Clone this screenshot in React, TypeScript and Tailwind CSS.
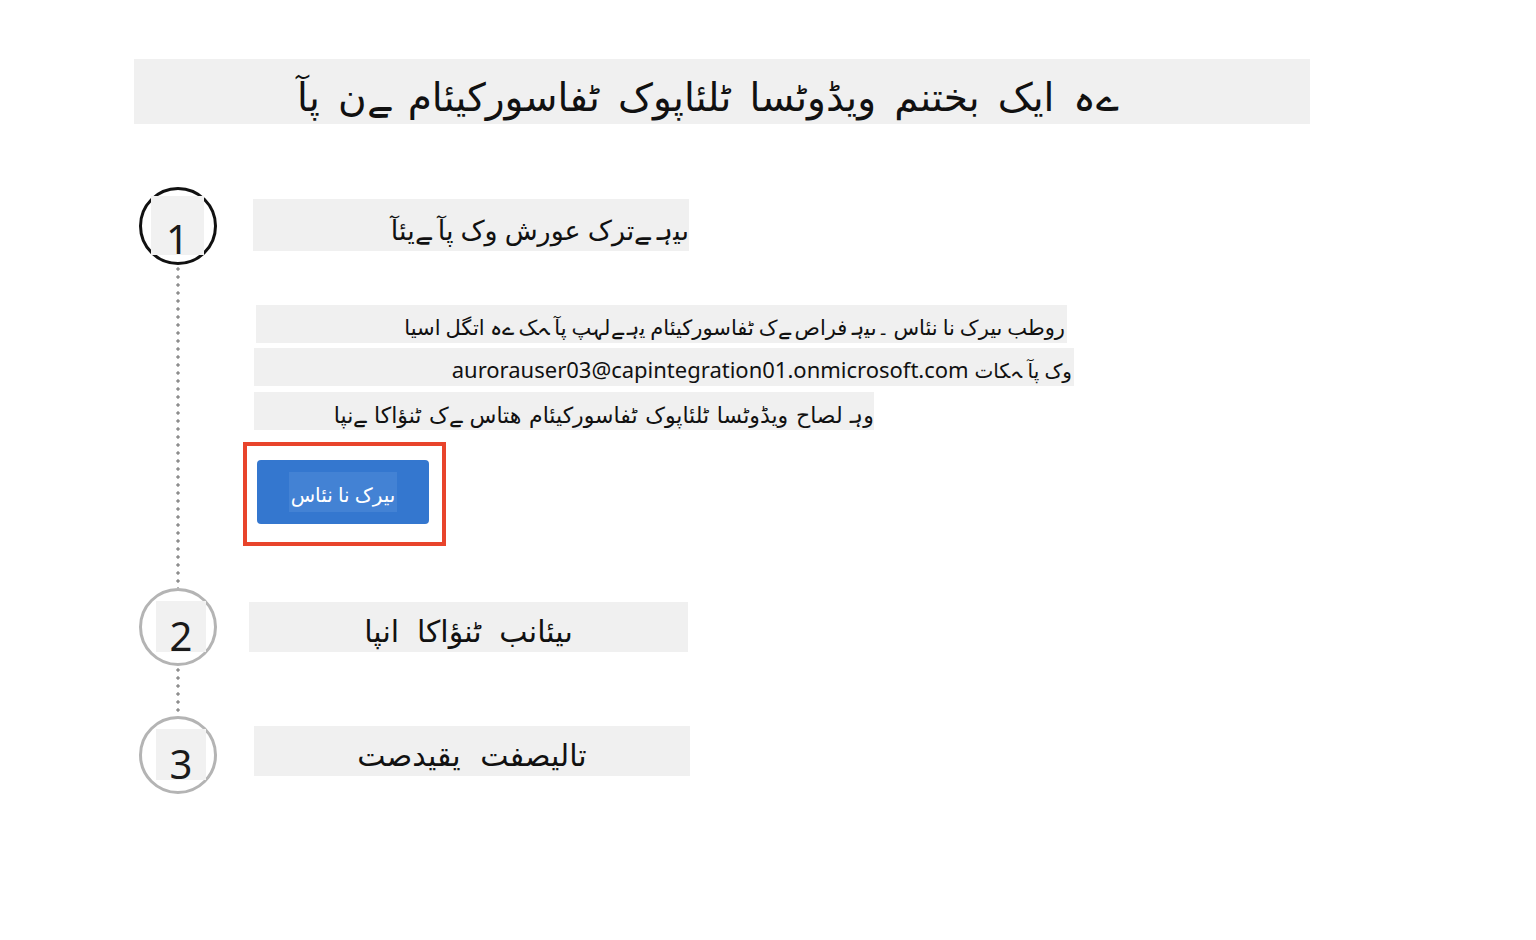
const ov = '[unicode-bidi:bidi-override] [direction:ltr] whitespace-nowrap'
const font = "font-['Noto_Sans','DejaVu_Sans',sans-serif]"

function StepCircle({ n, active }: { n: string; active?: boolean }) {
  return (
    <div
      className={`relative h-[78px] w-[78px] shrink-0 rounded-full border-[3px] ${
        active ? 'border-[#111]' : 'border-[#b4b4b4]'
      }`}
    >
      <div
        className={`absolute flex items-end justify-center bg-[#f1f1f1] ${
          active ? 'left-[9px] top-[6px] h-[59px] w-[53px]' : 'left-[14px] top-[10px] h-[51px] w-[50px]'
        }`}
      >
        <span className="text-[40px] leading-[32px] text-[#1a1a1a]">{n}</span>
      </div>
    </div>
  )
}

function Dots({ h }: { h: string }) {
  return (
    <div
      className={`${h} w-[4px] self-center bg-[radial-gradient(circle,#8e8e8e_1.4px,transparent_1.9px)] bg-[length:4px_8px] bg-repeat-y`}
    />
  )
}

export default function App() {
  return (
    <div className={`min-h-[940px] w-[1536px] bg-white ${font} text-[#111]`}>
      <div className="pl-[134px] pt-[59px]">
        <div className="flex h-[65px] w-[1176px] items-center bg-[#f0f0f0] pl-[163px]">
          <span className={`${ov} text-[39px] leading-none pt-[8px] [word-spacing:8px]`}>
            آپ نے مائیکروسافٹ کوپائلٹ اسٹوڈیو منتخب کیا ہے
          </span>
        </div>
      </div>

      <div className="mt-[63px] flex pl-[139px]">
        {/* step markers */}
        <div className="flex w-[78px] flex-col">
          <StepCircle n="1" active />
          <Dots h="h-[323px]" />
          <StepCircle n="2" />
          <Dots h="h-[50px]" />
          <StepCircle n="3" />
        </div>

        {/* content */}
        <div className="ml-[26px] flex flex-col items-start">
          <div className="ml-[10px] mt-[12px] flex h-[52px] w-[436px] items-center justify-end bg-[#f0f0f0]">
            <span className={`${ov} text-[27px] leading-none pt-[8px]`}>آئیے آپ کو شروع کرتے ہیں</span>
          </div>

          <div className="ml-[13px] mt-[54px] flex h-[38px] w-[811px] items-center justify-end bg-[#f0f0f0] pr-[2px]">
            <span className={`${ov} text-[21px] leading-none pt-[6px] [word-spacing:-0.5px]`}>
              ایسا لگتا ہے کہ آپ پہلے ہی مائیکروسافٹ کے صارف ہیں۔ سائن ان کریں بطور
            </span>
          </div>
          <div className="ml-[11px] mt-[5px] flex h-[38px] w-[820px] items-center justify-end bg-[#f0f0f0] pr-[2px]">
            <span className={`${ov} leading-none pt-[4px]`}>
              <span className="text-[22px]">aurorauser03@capintegration01.onmicrosoft.com </span>
              <span className="text-[20px]">تاکہ آپ کو</span>
            </span>
          </div>
          <div className="ml-[11px] mt-[6px] flex h-[38px] w-[620px] items-center justify-end bg-[#f0f0f0]">
            <span className={`${ov} text-[22px] leading-none pt-[6px] [word-spacing:2px]`}>
              اپنے اکاؤنٹ کے ساتھ مائیکروسافٹ کوپائلٹ اسٹوڈیو حاصل ہو
            </span>
          </div>

          <div className="mt-[12px] h-[104px] w-[203px] border-[4px] border-[#e8442b] pl-[10px] pt-[14px]">
            <div className="flex h-[64px] w-[172px] items-center justify-center rounded-[4px] bg-[#3477cf]">
              <div className="flex h-[40px] w-[108px] items-center justify-center bg-[#4382d4]">
                <span className={`${ov} text-[20px] leading-none text-white pt-[6px]`}>سائن ان کریں</span>
              </div>
            </div>
          </div>

          <div className="ml-[6px] mt-[56px] flex h-[50px] w-[439px] items-center justify-center bg-[#f0f0f0]">
            <span className={`${ov} text-[30px] leading-none pt-[8px] [word-spacing:10px]`}>اپنا اکاؤنٹ بنائیں</span>
          </div>

          <div className="ml-[11px] mt-[74px] flex h-[50px] w-[436px] items-center justify-center bg-[#f0f0f0]">
            <span className={`${ov} text-[30px] leading-none pt-[8px] [word-spacing:12px]`}>تصدیقی تفصیلات</span>
          </div>
        </div>
      </div>
    </div>
  )
}
